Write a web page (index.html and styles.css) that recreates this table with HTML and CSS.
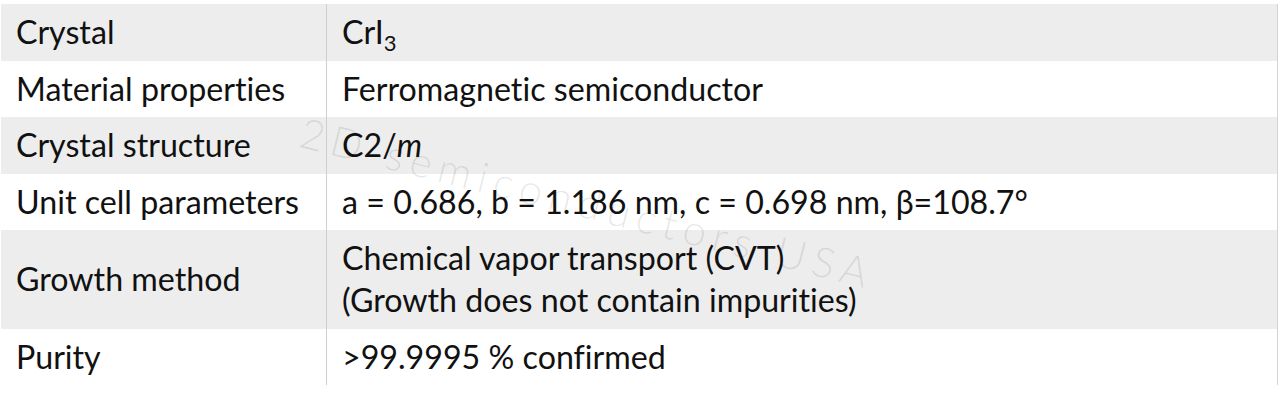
FILE: index.html
```html
<!DOCTYPE html>
<html lang="en">
<head>
<meta charset="utf-8">
<title>CrI3 crystal specifications</title>
<link rel="stylesheet" href="styles.css">
</head>
<body>
<div class="sheet">
  <table class="spec">
    <tbody>
      <tr class="shade"><th>Crystal</th><td>CrI<sub>3</sub></td></tr>
      <tr><th>Material properties</th><td>Ferromagnetic semiconductor</td></tr>
      <tr class="shade"><th>Crystal structure</th><td>C2/<i>m</i></td></tr>
      <tr><th>Unit cell parameters</th><td>a = 0.686, b = 1.186 nm, c = 0.698 nm, β=108.7°</td></tr>
      <tr class="shade"><th>Growth method</th><td>Chemical vapor transport (CVT)<br>(Growth does not contain impurities)</td></tr>
      <tr><th>Purity</th><td>&gt;99.9995 % confirmed</td></tr>
    </tbody>
  </table>
  <div class="watermark">2D semiconductors USA</div>
</div>
</body>
</html>
```
FILE: styles.css
```css
html, body {
  margin: 0;
  padding: 0;
  background: #ffffff;
}

body {
  font-family: Lato, "Open Sans", "Liberation Sans", sans-serif;
  color: #111111;
}

.sheet {
  position: relative;
  margin: 4px 2px 0 1px;
  width: 1276px;
  border-right: 1px solid #d4d4d4;
  overflow: hidden;
}

.spec {
  width: 100%;
  border-collapse: collapse;
  font-size: 32.2px;
  line-height: 42px;
  font-variant-ligatures: none;
  font-feature-settings: "liga" 0, "clig" 0;
}

.spec th,
.spec td {
  padding: 7px 15px 7.5px 15px;
  text-align: left;
  vertical-align: middle;
  font-weight: 400;
}

.spec th {
  width: 295px;
  border-right: 1px solid #cfcfcf;
}

.spec tr.shade {
  background: #ededed;
}

.spec sub {
  font-size: 22px;
  line-height: 0;
  vertical-align: -7px;
}

.spec i {
  font-style: italic;
}

.watermark {
  position: absolute;
  left: 300px;
  top: 102px;
  transform: rotate(14deg);
  transform-origin: 0 50%;
  font-size: 42px;
  font-weight: 300;
  letter-spacing: 7px;
  color: rgba(0, 0, 0, 0.09);
  white-space: nowrap;
  pointer-events: none;
}
```
